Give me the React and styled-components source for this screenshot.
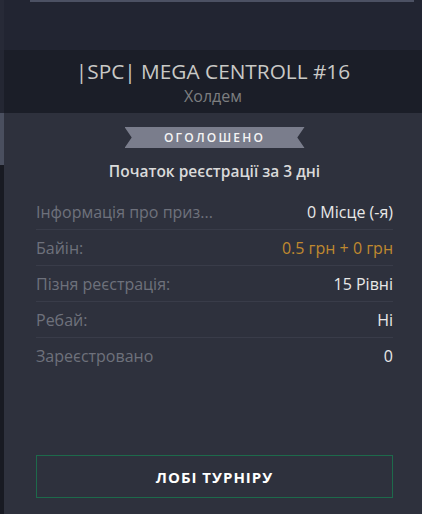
import React from "react";
import styled, { createGlobalStyle } from "styled-components";

const GlobalStyle = createGlobalStyle`
  html, body {
    margin: 0;
    padding: 0;
    background: #222532;
    font-family: "Open Sans", "Noto Sans", sans-serif;
    overflow: hidden;
  }
`;

const Page = styled.div`
  width: 422px;
  height: 514px;
  display: flex;
  flex-direction: column;
  overflow: hidden;
`;

const TopArea = styled.div`
  height: 50px;
  display: flex;
  background: #222532;
`;

const EdgeStrip = styled.div`
  width: 4px;
  flex-shrink: 0;
  background: ${(p) => p.$bg};
`;

const TopInner = styled.div`
  flex: 1;
  padding: 0 8px 0 26px;
`;

const TopLine = styled.div`
  height: 2px;
  background: #4c5163;
`;

const Header = styled.div`
  height: 63px;
  display: flex;
  background: #1b1e28;
`;

const HeaderInner = styled.div`
  flex: 1;
  display: flex;
  flex-direction: column;
  align-items: center;
  padding-top: 7px;
`;

const Title = styled.div`
  color: #c9c9c6;
  font-size: 20.8px;
  line-height: 28px;
`;

const Subtitle = styled.div`
  color: #7d7e80;
  font-size: 16px;
  line-height: 22px;
`;

const Body = styled.div`
  flex: 1;
  display: flex;
  background: #2e313d;
`;

const Scroll = styled.div`
  width: 4px;
  flex-shrink: 0;
  display: flex;
  flex-direction: column;
  background: #181a22;
`;

const Thumb = styled.div`
  height: 52px;
  background: #4a4f5f;
`;

const Content = styled.div`
  flex: 1;
  display: flex;
  flex-direction: column;
  padding: 14px 29px 16px 32px;
`;

const RibbonRow = styled.div`
  display: flex;
  justify-content: center;
`;

const Ribbon = styled.div`
  width: 180px;
  height: 21px;
  display: flex;
  align-items: center;
  justify-content: center;
  background: #7a7d8c;
  clip-path: polygon(0 0, 100% 0, 96% 50%, 100% 100%, 0 100%, 4% 50%);
  color: #f4f4f4;
  font-size: 12px;
  font-weight: 600;
  letter-spacing: 2.2px;
`;

const Start = styled.div`
  text-align: center;
  color: #dadada;
  font-size: 15.5px;
  font-weight: 600;
  margin-top: 12px;
  line-height: 22px;
`;

const Rows = styled.div`
  margin-top: 12px;
  display: flex;
  flex-direction: column;
`;

const Row = styled.div`
  display: flex;
  justify-content: space-between;
  align-items: center;
  height: 35px;
  border-bottom: 1px solid ${(p) => (p.$last ? "transparent" : "#393c49")};
  font-size: 16px;
`;

const Label = styled.span`
  color: #6e717c;
`;

const Value = styled.span`
  color: ${(p) => (p.$accent ? "#c0892f" : "#e8e8e8")};
  font-weight: ${(p) => (p.$accent ? 400 : 500)};
`;

const Spacer = styled.div`
  flex: 1;
`;

const LobbyButton = styled.button`
  height: 43px;
  background: transparent;
  border: 1px solid #1d6a4b;
  color: #ffffff;
  font-family: inherit;
  font-size: 15px;
  font-weight: 700;
  letter-spacing: 1px;
  cursor: pointer;
`;

const rows = [
  { label: "Інформація про приз...", value: "0 Місце (-я)" },
  { label: "Байін:", value: "0.5 грн + 0 грн", accent: true },
  { label: "Пізня реєстрація:", value: "15 Рівні" },
  { label: "Ребай:", value: "Ні" },
  { label: "Зареєстровано", value: "0" },
];

export default function App() {
  return (
    <Page>
      <GlobalStyle />
      <TopArea>
        <EdgeStrip $bg="#272a37" />
        <TopInner>
          <TopLine />
        </TopInner>
      </TopArea>
      <Header>
        <EdgeStrip $bg="#242733" />
        <HeaderInner>
          <Title>|SPC| MEGA CENTROLL #16</Title>
          <Subtitle>Холдем</Subtitle>
        </HeaderInner>
      </Header>
      <Body>
        <Scroll>
          <Thumb />
        </Scroll>
        <Content>
          <RibbonRow>
            <Ribbon>ОГОЛОШЕНО</Ribbon>
          </RibbonRow>
          <Start>Початок реєстрації за 3 дні</Start>
          <Rows>
            {rows.map((r, i) => (
              <Row key={r.label} $last={i === rows.length - 1}>
                <Label>{r.label}</Label>
                <Value $accent={r.accent}>{r.value}</Value>
              </Row>
            ))}
          </Rows>
          <Spacer />
          <LobbyButton>ЛОБІ ТУРНІРУ</LobbyButton>
        </Content>
      </Body>
    </Page>
  );
}
